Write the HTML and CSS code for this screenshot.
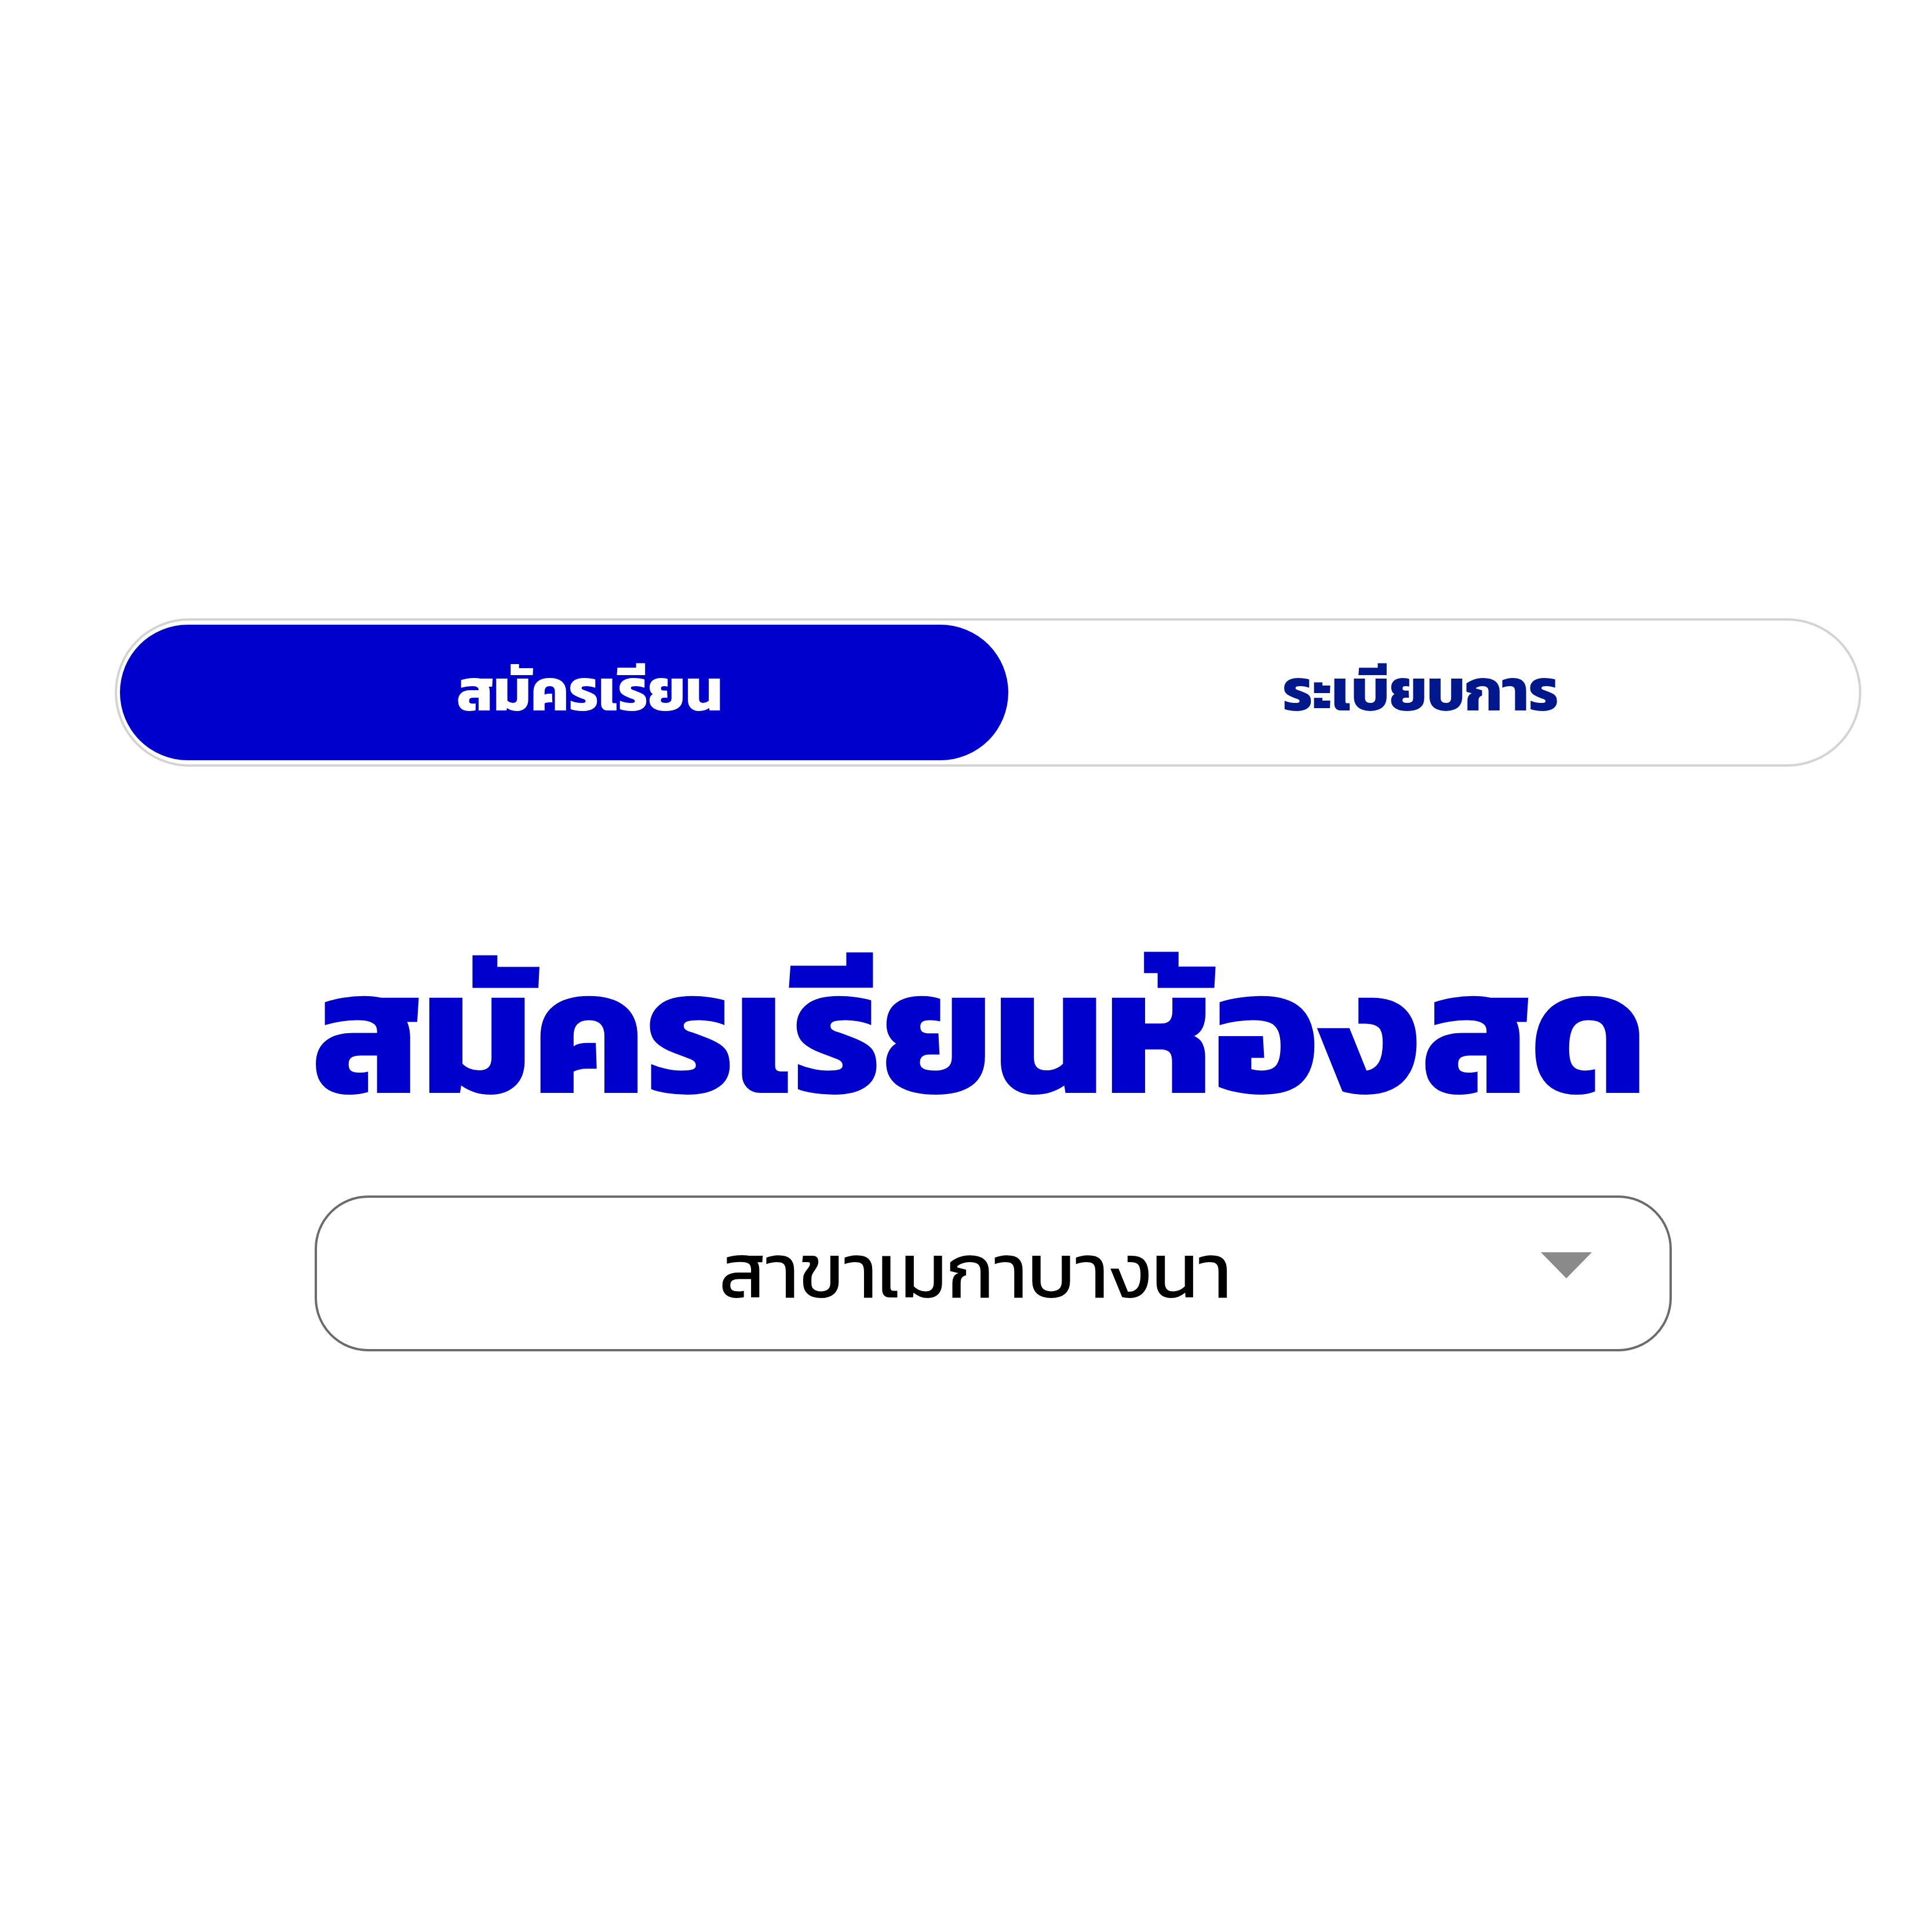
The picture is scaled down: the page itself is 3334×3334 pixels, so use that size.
FILE: index.html
```html
<!DOCTYPE html>
<html lang="th">
<head>
<meta charset="utf-8">
<title>สมัครเรียนห้องสด</title>
<link rel="stylesheet" href="styles.css">
</head>
<body>
<main class="page">
  <nav class="tabs">
    <div class="tab tab-active"><span>สมัครเรียน</span></div>
    <div class="tab tab-idle"><span>ระเบียบการ</span></div>
  </nav>
  <h1 class="title">สมัครเรียนห้องสด</h1>
  <div class="select">
    <span class="select-text">สาขาเมกาบางนา</span>
    <span class="select-arrow"></span>
  </div>
</main>
</body>
</html>
```

FILE: styles.css
```css
html, body {
  margin: 0;
  padding: 0;
  background: #ffffff;
}
body {
  width: 3334px;
  height: 3334px;
  font-family: "Kanit", "Noto Sans Thai", sans-serif;
}
.page {
  display: flex;
  flex-direction: column;
  padding-top: 1067px;
}
.tabs {
  margin-left: 198px;
  width: 3014px;
  height: 256px;
  box-sizing: border-box;
  border: 4px solid #d3d3d3;
  border-radius: 9999px;
  padding: 7px 5px;
  display: flex;
}
.tab {
  display: flex;
  align-items: center;
  justify-content: center;
  font-weight: 700;
  font-size: 102px;
  line-height: 1;
  border-radius: 9999px;
  padding-bottom: 10px;
  box-sizing: border-box;
}
.tab-active {
  width: 1533px;
  flex: none;
  background: #0000cd;
  color: #ffffff;
  padding-left: 88px;
}
.tab-idle {
  flex: 1;
  color: #00188c;
  padding-right: 40px;
}
.title {
  margin: 0;
  margin-left: 198px;
  width: 3014px;
  padding-right: 30px;
  box-sizing: border-box;
  text-align: center;
  color: #0000cd;
  font-weight: 700;
  font-size: 304px;
  line-height: 1.2;
  margin-top: 274px;
}
.select {
  position: relative;
  margin-left: 543px;
  margin-top: 101px;
  width: 2342px;
  height: 269px;
  box-sizing: border-box;
  border: 4px solid #6b6b6b;
  border-radius: 92px;
  display: flex;
  align-items: center;
  justify-content: center;
  padding-right: 62px;
  padding-bottom: 8px;
  font-size: 132px;
  font-weight: 400;
  line-height: 1;
  color: #000000;
}
.select-arrow {
  position: absolute;
  right: 134px;
  top: 94px;
  width: 0;
  height: 0;
  border-left: 44px solid transparent;
  border-right: 44px solid transparent;
  border-top: 45px solid #8a8a8a;
}
```
